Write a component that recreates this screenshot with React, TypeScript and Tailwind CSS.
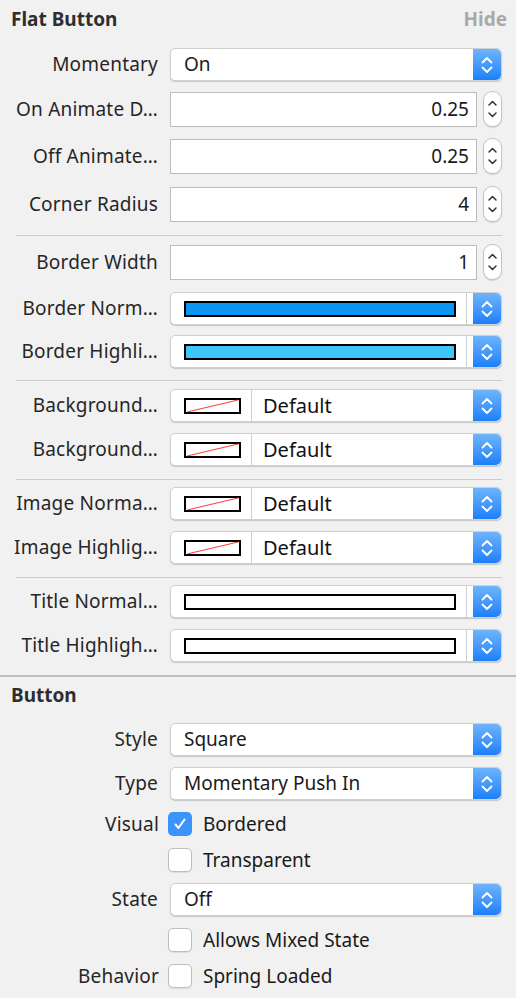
import React from "react";

const font = { fontFamily: '"Noto Sans", "Liberation Sans", sans-serif' };

function PopupArrows() {
  return (
    <div className="flex h-full w-[28px] shrink-0 items-center justify-center rounded-r-[5px] bg-gradient-to-b from-[#6db4fb] to-[#1a7ff9]">
      <svg width="14" height="20" viewBox="0 0 14 20" fill="none">
        <path d="M2.5 7.5L7 3l4.5 4.5" stroke="white" strokeWidth="1.8" strokeLinecap="round" strokeLinejoin="round" />
        <path d="M2.5 12.5L7 17l4.5-4.5" stroke="white" strokeWidth="1.8" strokeLinecap="round" strokeLinejoin="round" />
      </svg>
    </div>
  );
}

function Stepper() {
  return (
    <div className="ml-[6px] flex h-[36px] w-[19px] shrink-0 items-center justify-center rounded-[9px] border border-[#c4c4c4] bg-white shadow-[0_1px_1px_rgba(0,0,0,0.12)]">
      <svg width="11" height="26" viewBox="0 0 11 26" fill="none">
        <path d="M2 9L5.5 5.5 9 9" stroke="#333" strokeWidth="1.5" strokeLinecap="round" strokeLinejoin="round" />
        <path d="M2 17l3.5 3.5L9 17" stroke="#333" strokeWidth="1.5" strokeLinecap="round" strokeLinejoin="round" />
      </svg>
    </div>
  );
}

function Label({ text }: { text: string }) {
  return (
    <div className="w-[159px] shrink-0 whitespace-nowrap pr-[1px] text-right text-[19px] tracking-[0.2px] text-[#262626]">
      {text}
    </div>
  );
}

function Popup({ children }: { children: React.ReactNode }) {
  return (
    <div className="ml-[11px] flex h-[33px] flex-1 items-center rounded-[5px] border border-[#d0d0d0] bg-white shadow-[0_1px_1px_rgba(0,0,0,0.18)]">
      <div className="flex h-full flex-1 items-center">{children}</div>
      <PopupArrows />
    </div>
  );
}

function TextRow({ label, value, className }: { label: string; value: string; className: string }) {
  return (
    <div className={"flex h-[36px] items-center pr-[14px] " + className}>
      <Label text={label} />
      <div className="ml-[11px] flex h-[35px] flex-1 items-center justify-end border border-[#bdbdbd] bg-white pr-[7px] text-[19px] text-[#1a1a1a]">
        {value}
      </div>
      <Stepper />
    </div>
  );
}

function MenuRow({ label, value, className }: { label: string; value: string; className: string }) {
  return (
    <div className={"flex h-[33px] items-center pr-[14px] " + className}>
      <Label text={label} />
      <Popup>
        <span className="pl-[13px] text-[19px] text-[#1a1a1a]">{value}</span>
      </Popup>
    </div>
  );
}

function ColorRow({ label, color, className }: { label: string; color: string; className: string }) {
  return (
    <div className={"flex h-[33px] items-center pr-[14px] " + className}>
      <Label text={label} />
      <Popup>
        <div className="flex h-full flex-1 items-center pl-[13px] pr-[10px]">
          <div className="h-[16px] flex-1 border-2 border-black" style={{ background: color }} />
        </div>
        <div className="h-full w-px bg-[#cfcfcf]" />
        <div className="w-[6px]" />
      </Popup>
    </div>
  );
}

function DefaultRow({ label, className }: { label: string; className: string }) {
  return (
    <div className={"flex h-[33px] items-center pr-[14px] " + className}>
      <Label text={label} />
      <Popup>
        <div className="flex h-full w-[80px] items-center pl-[13px]">
          <svg width="57" height="16" viewBox="0 0 57 16">
            <rect x="1" y="1" width="55" height="14" fill="white" stroke="black" strokeWidth="2" />
            <path d="M3 14L54 2" stroke="#ff3b30" strokeWidth="1" />
          </svg>
        </div>
        <div className="h-full w-px bg-[#cfcfcf]" />
        <span className="pl-[11px] text-[20px] text-[#111]">Default</span>
      </Popup>
    </div>
  );
}

function Sep({ className }: { className: string }) {
  return <div className={"ml-[16px] mr-[14px] h-px bg-[#cbcbcb] " + className} />;
}

function Check({ label, checked, row, className }: { label: string; checked?: boolean; row?: string; className: string }) {
  return (
    <div className={"flex h-[24px] items-center " + className}>
      <div className="w-[159px] shrink-0 whitespace-nowrap text-right text-[19px] tracking-[0.2px] text-[#262626]">{row ?? ""}</div>
      <div className="ml-[9px] flex items-center">
        {checked ? (
          <div className="flex h-[24px] w-[24px] items-center justify-center rounded-[5px] bg-[#3b94f9]">
            <svg width="14" height="14" viewBox="0 0 14 14" fill="none">
              <path d="M2.5 7.5l3 3.5L11.5 2.5" stroke="white" strokeWidth="2" strokeLinecap="round" strokeLinejoin="round" />
            </svg>
          </div>
        ) : (
          <div className="h-[24px] w-[24px] rounded-[5px] border border-[#bdbdbd] bg-white shadow-[0_1px_1px_rgba(0,0,0,0.08)]" />
        )}
        <span className="ml-[11px] text-[19px] text-[#1a1a1a]">{label}</span>
      </div>
    </div>
  );
}

export default function App() {
  return (
    <div className="h-[998px] w-[516px] overflow-hidden bg-[#f1f1f1]" style={font}>
      <div className="flex h-[38px] items-center justify-between pl-[11px] pr-[9px] pt-[1px]">
        <span className="text-[19px] font-bold text-[#2e2e2e]">Flat Button</span>
        <span className="text-[19px] font-bold text-[#a9a9a9]">Hide</span>
      </div>

      <div className="flex flex-col">
        <MenuRow label="Momentary" value="On" className="mt-[10px]" />
        <TextRow label="On Animate D…" value="0.25" className="mt-[10px]" />
        <TextRow label="Off Animate…" value="0.25" className="mt-[11px]" />
        <TextRow label="Corner Radius" value="4" className="mt-[12px]" />
        <Sep className="mt-[13px]" />
        <TextRow label="Border Width" value="1" className="mt-[8px]" />
        <ColorRow label="Border Norm…" color="#0b96f6" className="mt-[12px]" />
        <ColorRow label="Border Highli…" color="#3ec6fb" className="mt-[10px]" />
        <Sep className="mt-[12px]" />
        <DefaultRow label="Background…" className="mt-[8px]" />
        <DefaultRow label="Background…" className="mt-[11px]" />
        <Sep className="mt-[13px]" />
        <DefaultRow label="Image Norma…" className="mt-[7px]" />
        <DefaultRow label="Image Highlig…" className="mt-[11px]" />
        <Sep className="mt-[13px]" />
        <ColorRow label="Title Normal…" color="#ffffff" className="mt-[7px]" />
        <ColorRow label="Title Highligh…" color="#ffffff" className="mt-[11px]" />
        <div className="mt-[13px] h-[2px] bg-[#bebebe]" />
        <div className="flex h-[36px] items-center px-[11px]">
          <span className="text-[19px] font-bold text-[#2e2e2e]">Button</span>
        </div>
        <MenuRow label="Style" value="Square" className="mt-[10px]" />
        <MenuRow label="Type" value="Momentary Push In" className="mt-[11px]" />
        <Check row="Visual" label="Bordered" checked className="mt-[12px]" />
        <Check label="Transparent" className="mt-[12px]" />
        <MenuRow label="State" value="Off" className="mt-[11px]" />
        <Check label="Allows Mixed State" className="mt-[12px]" />
        <Check row="Behavior" label="Spring Loaded" className="mt-[12px]" />
      </div>
    </div>
  );
}
